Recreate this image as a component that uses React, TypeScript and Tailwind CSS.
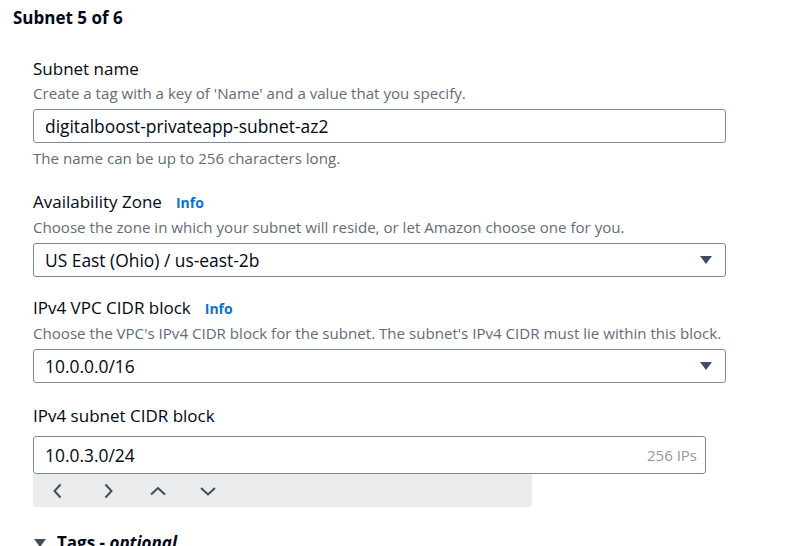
import React from "react";

const Caret = () => (
  <svg width="14" height="10" viewBox="0 0 14 10">
    <path d="M1 1 H13 L7 9 Z" fill="#414d5c" />
  </svg>
);

const Info = () => (
  <span className="ml-[14px] text-[14px] font-bold text-[#0972d3]">Info</span>
);

const Field = ({
  label,
  info,
  desc,
  className,
  children,
}: {
  label: string;
  info?: boolean;
  desc?: string;
  className?: string;
  children: React.ReactNode;
}) => (
  <div className={"flex flex-col " + (className || "")}>
    <div className="flex items-baseline text-[17px] leading-[24px] text-[#000716]">
      {label}
      {info && <Info />}
    </div>
    {desc && (
      <div className="text-[15.1px] leading-[24px] text-[#5f6b7a]">{desc}</div>
    )}
    {children}
  </div>
);

const SelectBox = ({ value }: { value: string }) => (
  <div className="mt-[4px] flex h-[34px] w-[693px] items-center justify-between rounded-[3px] border border-[#7d8998] pl-[11px] pr-[12px] text-[17.4px] text-[#000716]">
    <span>{value}</span>
    <Caret />
  </div>
);

export default function App() {
  return (
    <div
      className="h-[546px] w-[806px] overflow-hidden bg-white"
      style={{ fontFamily: '"Open Sans", "Noto Sans", sans-serif' }}
    >
      <div className="pl-[13px] pt-[6px] text-[17px] font-bold leading-[24px] text-[#000716]">
        Subnet 5 of 6
      </div>

      <div className="flex flex-col pl-[33px] pt-[27px]">
        <Field
          label="Subnet name"
          desc="Create a tag with a key of 'Name' and a value that you specify."
        >
          <div className="mt-[4px] flex h-[34px] w-[693px] items-center rounded-[3px] border border-[#7d8998] pl-[11px] text-[17.4px] text-[#000716]">
            digitalboost-privateapp-subnet-az2
          </div>
          <div className="mt-[3px] text-[15.1px] leading-[24px] text-[#5f6b7a]">
            The name can be up to 256 characters long.
          </div>
        </Field>

        <Field
          className="mt-[20px]"
          label="Availability Zone"
          info
          desc="Choose the zone in which your subnet will reside, or let Amazon choose one for you."
        >
          <SelectBox value="US East (Ohio) / us-east-2b" />
        </Field>

        <Field
          className="mt-[19px]"
          label="IPv4 VPC CIDR block"
          info
          desc="Choose the VPC's IPv4 CIDR block for the subnet. The subnet's IPv4 CIDR must lie within this block."
        >
          <SelectBox value="10.0.0.0/16" />
        </Field>

        <Field className="mt-[21px]" label="IPv4 subnet CIDR block">
          <div className="mt-[8px] flex h-[38px] w-[673px] items-center justify-between rounded-[3px] border border-[#7d8998] pl-[11px] pr-[8px] text-[17.4px] text-[#000716]">
            <span>10.0.3.0/24</span>
            <span className="text-[15px] text-[#8d99a8]">256 IPs</span>
          </div>
          <div className="flex h-[33px] w-[499px] items-center gap-[34px] rounded-b-[4px] bg-[#e9ebed] pl-[17px]">
            <svg width="16" height="16" viewBox="0 0 16 16" fill="none" stroke="#414d5c" strokeWidth="2">
              <path d="M10.5 1.5 L4.5 8 L10.5 14.5" />
            </svg>
            <svg width="16" height="16" viewBox="0 0 16 16" fill="none" stroke="#414d5c" strokeWidth="2">
              <path d="M5.5 1.5 L11.5 8 L5.5 14.5" />
            </svg>
            <svg width="16" height="16" viewBox="0 0 16 16" fill="none" stroke="#414d5c" strokeWidth="2">
              <path d="M1 11.5 L8 5 L15 11.5" />
            </svg>
            <svg width="16" height="16" viewBox="0 0 16 16" fill="none" stroke="#414d5c" strokeWidth="2">
              <path d="M1 5 L8 11.5 L15 5" />
            </svg>
          </div>
        </Field>

        <div className="mt-[24px] flex items-center gap-[10px] text-[17px] font-bold leading-[24px] text-[#000716]">
          <Caret />
          <span>
            Tags - <span className="italic">optional</span>
          </span>
        </div>
      </div>
    </div>
  );
}
